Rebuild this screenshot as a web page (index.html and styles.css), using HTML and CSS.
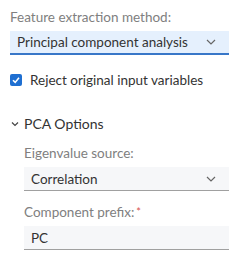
FILE: index.html
```html
<!DOCTYPE html>
<html>
<head>
<meta charset="utf-8">
<link rel="stylesheet" href="styles.css">
</head>
<body>
<div class="panel">
  <div class="field">
    <div class="label">Feature extraction method:</div>
    <div class="select primary">
      <span>Principal component analysis</span>
      <svg class="chev" width="10" height="6" viewBox="0 0 10 6"><path d="M1 1 L5 5 L9 1" fill="none" stroke="#666" stroke-width="1.2"/></svg>
    </div>
  </div>
  <label class="check">
    <span class="box"><svg width="12" height="12" viewBox="0 0 12 12"><path d="M3 6.2 L5.2 8.4 L9 3.8" fill="none" stroke="#fff" stroke-width="1.6"/></svg></span>
    <span>Reject original input variables</span>
  </label>
  <div class="group">
    <div class="group-head">
      <svg width="8" height="6" viewBox="0 0 8 6"><path d="M1 1.5 L4 4.5 L7 1.5" fill="none" stroke="#444" stroke-width="1.2"/></svg>
      <span>PCA Options</span>
    </div>
    <div class="group-body">
      <div class="field">
        <div class="label">Eigenvalue source:</div>
        <div class="select">
          <span>Correlation</span>
          <svg class="chev" width="10" height="6" viewBox="0 0 10 6"><path d="M1 1 L5 5 L9 1" fill="none" stroke="#666" stroke-width="1.2"/></svg>
        </div>
      </div>
      <div class="field">
        <div class="label">Component prefix:<span class="req">*</span></div>
        <div class="select input"><span>PC</span></div>
      </div>
    </div>
  </div>
</div>
</body>
</html>
```
FILE: styles.css
```css
html, body { margin: 0; padding: 0; background: #fff; }
body { font-family: "Lato", "Noto Sans", sans-serif; font-size: 13.5px; color: #333; }
.panel { padding: 8px 8px 0 10px; display: flex; flex-direction: column; }
.field { display: flex; flex-direction: column; }
.label { color: #808080; line-height: 18px; margin-bottom: 5px; }
.req { color: #d9534f; margin-left: 2px; font-size: 11px; vertical-align: top; }
.select { height: 23px; display: flex; align-items: center; justify-content: space-between; padding: 0 8px 0 7px; background: #f6f7f9; border-bottom: 1px solid #a0a0a0; color: #333; }
.select.primary { height: 22px; background: #e5f0fd; border-bottom: 2px solid #3877c8; }
.chev { margin-right: 5px; }
.check { display: flex; align-items: center; gap: 8px; margin-top: 17px; line-height: 16px; }
.box { width: 12px; height: 12px; background: #1f6fd1; border-radius: 2px; display: flex; }
.group { margin-top: 27px; }
.group-head { display: flex; align-items: center; gap: 5px; padding-left: 1px; font-size: 14px; color: #333; line-height: 18px; }
.group-body { padding-left: 14px; display: flex; flex-direction: column; gap: 12px; margin-top: 11px; }
.input { justify-content: flex-start; }
```
